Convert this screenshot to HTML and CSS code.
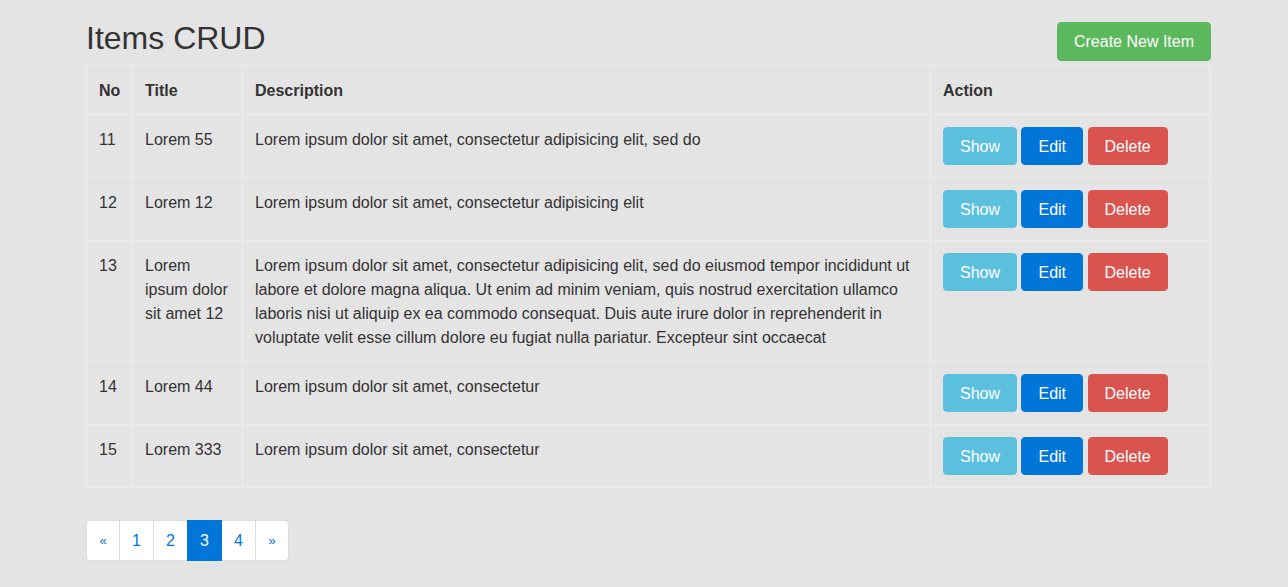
FILE: index.html
```html
<!DOCTYPE html>
<html lang="en">
<head>
    <meta charset="UTF-8">
    <title>Items CRUD</title>
    <link rel="stylesheet" href="styles.css">
</head>
<body>
	<div class="container">
		<div class="pageHeader">
			<h2>Items CRUD</h2>
			<a class="btn btnSuccess" href="#">Create New Item</a>
		</div>
		<table class="itemsTable">
			<colgroup>
				<col class="colNo">
				<col class="colTitle">
				<col class="colDesc">
				<col class="colAction">
			</colgroup>
			<thead>
				<tr>
					<th>No</th>
					<th>Title</th>
					<th>Description</th>
					<th>Action</th>
				</tr>
			</thead>
			<tbody>
				<tr>
					<td>11</td>
					<td>Lorem 55</td>
					<td>Lorem ipsum dolor sit amet, consectetur adipisicing elit, sed do</td>
					<td class="actions">
						<a class="btn btnInfo" href="#">Show</a>
						<a class="btn btnPrimary" href="#">Edit</a>
						<a class="btn btnDanger" href="#">Delete</a>
					</td>
				</tr>
				<tr>
					<td>12</td>
					<td>Lorem 12</td>
					<td>Lorem ipsum dolor sit amet, consectetur adipisicing elit</td>
					<td class="actions">
						<a class="btn btnInfo" href="#">Show</a>
						<a class="btn btnPrimary" href="#">Edit</a>
						<a class="btn btnDanger" href="#">Delete</a>
					</td>
				</tr>
				<tr>
					<td>13</td>
					<td>Lorem ipsum dolor sit amet 12</td>
					<td>Lorem ipsum dolor sit amet, consectetur adipisicing elit, sed do eiusmod tempor incididunt ut labore et dolore magna aliqua. Ut enim ad minim veniam, quis nostrud exercitation ullamco laboris nisi ut aliquip ex ea commodo consequat. Duis aute irure dolor in reprehenderit in voluptate velit esse cillum dolore eu fugiat nulla pariatur. Excepteur sint occaecat</td>
					<td class="actions">
						<a class="btn btnInfo" href="#">Show</a>
						<a class="btn btnPrimary" href="#">Edit</a>
						<a class="btn btnDanger" href="#">Delete</a>
					</td>
				</tr>
				<tr>
					<td>14</td>
					<td>Lorem 44</td>
					<td>Lorem ipsum dolor sit amet, consectetur</td>
					<td class="actions">
						<a class="btn btnInfo" href="#">Show</a>
						<a class="btn btnPrimary" href="#">Edit</a>
						<a class="btn btnDanger" href="#">Delete</a>
					</td>
				</tr>
				<tr>
					<td>15</td>
					<td>Lorem 333</td>
					<td>Lorem ipsum dolor sit amet, consectetur</td>
					<td class="actions">
						<a class="btn btnInfo" href="#">Show</a>
						<a class="btn btnPrimary" href="#">Edit</a>
						<a class="btn btnDanger" href="#">Delete</a>
					</td>
				</tr>
			</tbody>
		</table>
		<ul class="pagination">
			<li class="arrow"><a href="#">&laquo;</a></li>
			<li><a href="#">1</a></li>
			<li><a href="#">2</a></li>
			<li class="active"><a href="#">3</a></li>
			<li><a href="#">4</a></li>
			<li class="arrow"><a href="#">&raquo;</a></li>
		</ul>
	</div>
</body>
</html>
```

FILE: styles.css
```css
body,html{
	margin: 0;
	padding: 0;
	background: #e4e4e4;
	font-family: "Liberation Sans", Arial, sans-serif;
	font-size: 16px;
	line-height: 1.5;
	color: #333;
}
.container{
	width: 1124px;
	margin-left: 86px;
}
.pageHeader{
	display: flex;
	justify-content: space-between;
	align-items: flex-start;
	padding-top: 21px;
	margin-bottom: 4px;
}
.pageHeader h2{
	margin: 0;
	font-size: 32px;
	font-weight: 400;
	line-height: 1.1;
}
.pageHeader .btn{
	margin-top: 1px;
	margin-right: -1px;
	padding: 8px 16px 7px;
}
.btn{
	display: inline-block;
	padding: 8px 16px 6px;
	font-size: 16px;
	line-height: 22px;
	color: #fff;
	text-decoration: none;
	border: 1px solid transparent;
	border-radius: 4px;
}
.btnSuccess{background: #5cb85c; border-color: #5cb85c;}
.btnInfo{background: #5bc0de; border-color: #5bc0de;}
.btnPrimary{background: #0275d8; border-color: #0275d8;}
.btnDanger{background: #d9534f; border-color: #d9534f;}

.itemsTable{
	width: 1124px;
	table-layout: fixed;
	border-collapse: collapse;
	border: 1px solid #ececec;
	margin-bottom: 16px;
}
.colNo{width: 46px;}
.colTitle{width: 110px;}
.colDesc{width: 688px;}
.colAction{width: 280px;}
.itemsTable th,
.itemsTable td{
	padding: 13px 12px 11px;
	border: 1px solid #ececec;
	text-align: left;
	vertical-align: top;
	color: #333;
}
.itemsTable td.actions{
	padding: 12px;
}
.itemsTable th{
	font-weight: 700;
}
.pagination{
	display: flex;
	list-style: none;
	margin: 32px 0 0;
	padding: 0;
}
.pagination li a{
	display: block;
	width: 9px;
	margin-left: -1px;
	padding: 8px 12px;
	line-height: 23px;
	text-align: center;
	color: #0275d8;
	background: #fff;
	border: 1px solid #ddd;
	text-decoration: none;
}
.pagination li.arrow a{
	width: 8px;
	font-size: 13px;
}
.pagination li:first-child a{
	margin-left: 0;
	border-radius: 4px 0 0 4px;
}
.pagination li:last-child a{
	border-radius: 0 4px 4px 0;
}
.pagination li.active a{
	position: relative;
	background: #0275d8;
	border-color: #0275d8;
	color: #fff;
}
```
